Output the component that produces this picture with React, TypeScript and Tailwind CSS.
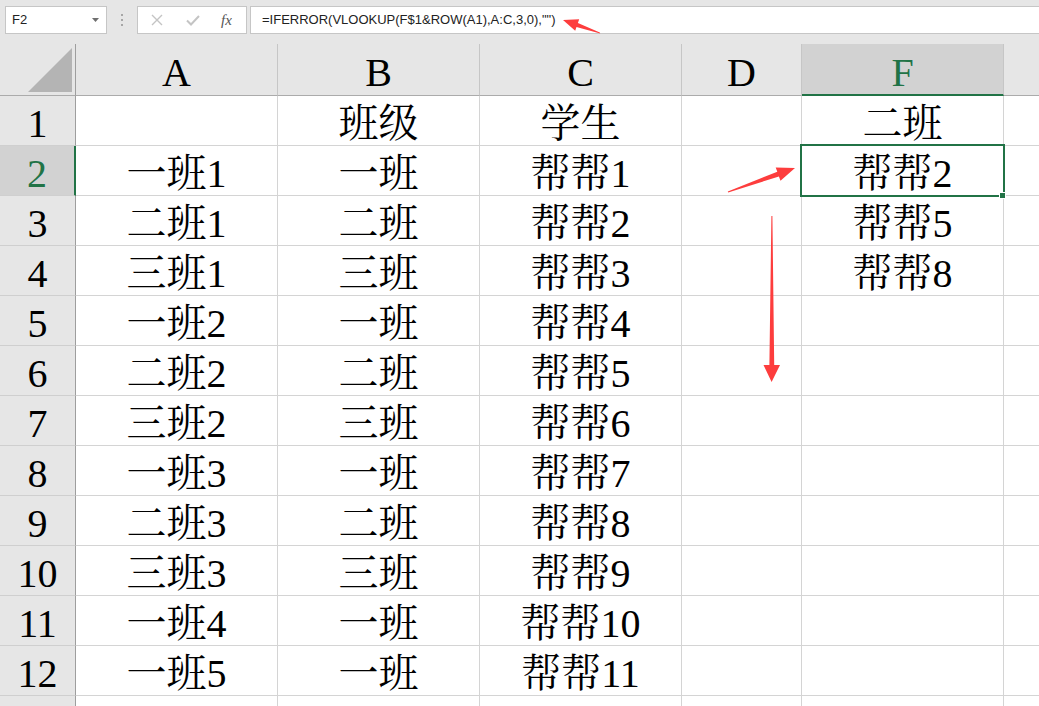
import React from 'react';

const colWidths = 'grid-cols-[76px_202px_202px_202px_120px_202px_1fr]';

const headers = ['A', 'B', 'C', 'D', 'F'];

const rows: string[][] = [
  ['', '班级', '学生', '', '二班'],
  ['一班1', '一班', '帮帮1', '', '帮帮2'],
  ['二班1', '二班', '帮帮2', '', '帮帮5'],
  ['三班1', '三班', '帮帮3', '', '帮帮8'],
  ['一班2', '一班', '帮帮4', '', ''],
  ['二班2', '二班', '帮帮5', '', ''],
  ['三班2', '三班', '帮帮6', '', ''],
  ['一班3', '一班', '帮帮7', '', ''],
  ['二班3', '二班', '帮帮8', '', ''],
  ['三班3', '三班', '帮帮9', '', ''],
  ['一班4', '一班', '帮帮10', '', ''],
  ['一班5', '一班', '帮帮11', '', ''],
  ['', '', '', '', ''],
];

const serif = "font-['Liberation_Serif','Noto_Serif_CJK_SC','Noto_Sans_CJK_SC',serif]";

function Toolbar() {
  return (
    <div className="h-[34px] bg-[#e6e6e6] flex items-start pt-[6px] font-['Liberation_Sans','Noto_Sans_CJK_SC',sans-serif] text-[13px] text-[#222]">
      {/* name box */}
      <div className="ml-[5px] w-[102px] h-[28px] bg-white border border-[#c6c6c6] flex items-center justify-between pl-[6px] pr-[7px]">
        <span>F2</span>
        <svg width="7" height="4" viewBox="0 0 7 4">
          <polygon points="0,0 7,0 3.5,4" fill="#6f6f6f" />
        </svg>
      </div>
      <div className="w-[30px] h-[28px] flex flex-col items-center justify-center gap-[3px]">
        <span className="w-[2px] h-[2px] bg-[#a6a6a6]" />
        <span className="w-[2px] h-[2px] bg-[#a6a6a6]" />
        <span className="w-[2px] h-[2px] bg-[#a6a6a6]" />
      </div>
      {/* cancel / enter / fx */}
      <div className="w-[110px] h-[28px] bg-white border border-[#c6c6c6] flex items-center">
        <svg className="ml-[13px]" width="12" height="12" viewBox="0 0 12 12">
          <path d="M1 1 L11 11 M11 1 L1 11" stroke="#c4c4c4" strokeWidth="1.4" fill="none" />
        </svg>
        <svg className="ml-[23px]" width="14" height="11" viewBox="0 0 14 11">
          <path d="M1 5.5 L5 9.5 L13 1" stroke="#c4c4c4" strokeWidth="2" fill="none" />
        </svg>
        <span className="ml-[21px] italic text-[15px] text-[#555] font-['Liberation_Serif',serif] leading-none">fx</span>
      </div>
      {/* formula */}
      <div className="ml-[3px] flex-1 h-[28px] bg-white border border-r-0 border-[#c6c6c6] flex items-center pl-[11px]">
        <span>=IFERROR(VLOOKUP(F$1&amp;ROW(A1),A:C,3,0),"")</span>
      </div>
    </div>
  );
}

function Arrows() {
  return (
    <svg className="absolute inset-0 pointer-events-none" width="1039" height="706" viewBox="0 0 1039 706">
      {/* formula arrow */}
      <polygon
        points="600.2,33.5 599.8,32.5 577.9,23.1 579.2,19.3 563,20 575.2,30.7 576.5,26.9"
        fill="#fd3d3d"
      />
      {/* diagonal arrow */}
      <polygon
        points="728.2,192.5 727.8,191.5 777.3,171.7 775.7,167.5 795,168 780.5,180.7 778.9,176.5"
        fill="#fd3d3d"
      />
      {/* down arrow */}
      <polygon
        points="771.4,216 772.4,216 774.2,365 780,365 771.6,382 763.5,365 769.4,365"
        fill="#fd3d3d"
      />
    </svg>
  );
}

export default function App() {
  return (
    <div className="relative w-[1039px] h-[706px] overflow-hidden bg-white">
      <Toolbar />
      <div className="h-[10px] bg-[#e6e6e6]" />
      <div className={`grid ${colWidths} ${serif} text-[40px] text-black`}>
        {/* header row */}
        <div className="h-[52px] bg-[#e6e6e6] border-r border-b border-r-[#9e9e9e] border-b-[#ababab] flex items-end justify-end pr-[3px] pb-[3px]">
          <svg width="44" height="44" viewBox="0 0 44 44">
            <polygon points="44,0 44,44 0,44" fill="#b4b4b4" />
          </svg>
        </div>
        {headers.map((h) => {
          const sel = h === 'F';
          return (
            <div
              key={h}
              className={
                sel
                  ? 'h-[52px] bg-[#d2d2d2] border-r border-r-[#c6c6c6] border-b-2 border-b-[#217346] text-[#217346] flex items-end justify-center pb-[1px]'
                  : 'h-[52px] bg-[#e6e6e6] border-r border-r-[#c6c6c6] border-b border-b-[#ababab] flex items-end justify-center pb-[2px]'
              }
            >
              <span className="leading-none">{h}</span>
            </div>
          );
        })}
        <div className="h-[52px] bg-[#e6e6e6] border-b border-b-[#ababab]" />

        {/* body rows; row 13 only peeks in at the bottom, its label is below the fold */}
        {rows.map((r, i) => {
          const n = i + 1;
          const sel = n === 2;
          const label = n < 13 ? String(n) : '';
          return (
            <React.Fragment key={n}>
              <div
                className={
                  sel
                    ? 'h-[50px] bg-[#d2d2d2] border-r-2 border-r-[#217346] border-b border-b-[#cfcfcf] text-[#217346] flex items-end justify-center pb-[1px]'
                    : 'h-[50px] bg-[#e6e6e6] border-r border-r-[#9e9e9e] border-b border-b-[#cfcfcf] flex items-end justify-center pb-[1px]'
                }
              >
                <span className="leading-none">{label}</span>
              </div>
              {r.map((c, j) => (
                <div
                  key={j}
                  className="h-[50px] border-r border-b border-[#d4d4d4] flex items-end justify-center pb-[1px]"
                >
                  <span className="leading-none whitespace-nowrap">{c}</span>
                </div>
              ))}
              <div className="h-[50px] border-b border-[#d4d4d4]" />
            </React.Fragment>
          );
        })}
      </div>

      {/* active cell F2 */}
      <div className="absolute left-[800px] top-[144px] w-[205px] h-[53px] border-2 border-[#217346] pointer-events-none" />
      <div className="absolute left-[999px] top-[192px] w-[7px] h-[7px] bg-[#217346] border border-white" />

      <Arrows />
    </div>
  );
}
